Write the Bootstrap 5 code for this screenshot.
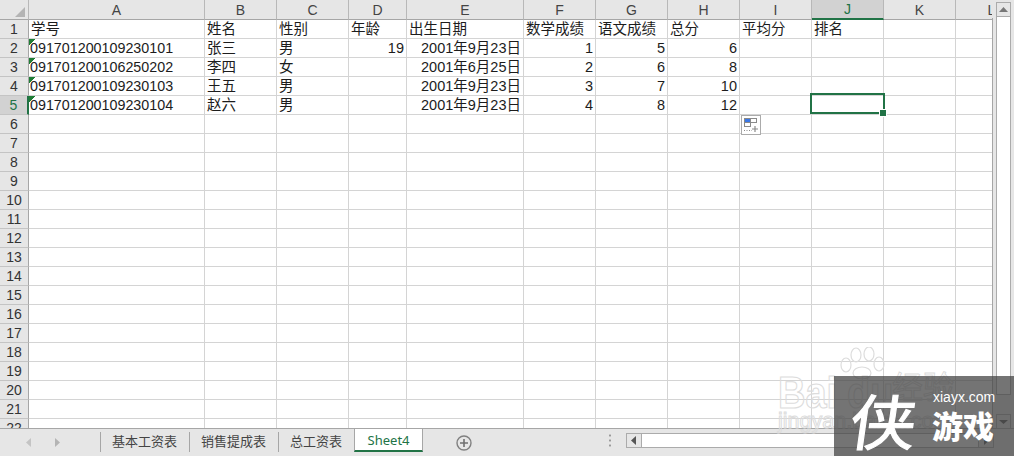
<!DOCTYPE html>
<html lang="zh-CN">
<head>
    <meta charset="UTF-8">
    <title>Sheet4 - Excel</title>
    <link href="https://cdn.jsdelivr.net/npm/bootstrap@5.3.0/dist/css/bootstrap.min.css" rel="stylesheet">
    <style>
        html, body { width: 1014px; height: 456px; overflow: hidden; }
        body { font-family: "Liberation Sans", "Noto Sans CJK SC", sans-serif; background: #e6e6e6; color: #1c1c1c; }

        .app-frame { width: 1014px; height: 456px; position: relative; overflow: hidden; }
        .work-area { height: 428px; }

        /* grid */
        .sheet-wrap { width: 992px; height: 428px; overflow: hidden; background: #fff; position: relative; }
        .xl-grid { width: 1028px; table-layout: fixed; border-collapse: separate; border-spacing: 0; font-size: 14.5px; line-height: 18px; }
        .w-head { width: 29px; }
        .w-a { width: 176px; }
        .w-std { width: 72px; }
        .w-d { width: 58px; }
        .w-e { width: 117px; }
        .xl-grid td, .xl-grid th { height: 19px; padding: 0 2px; border-right: 1px solid #d4d4d4; border-bottom: 1px solid #d4d4d4; white-space: nowrap; overflow: hidden; font-weight: 400; }
        .xl-grid thead th { background: #e6e6e6; color: #444; text-align: center; font-size: 14px; border-right-color: #b8b8b8; border-bottom-color: #a6a6a6; padding: 0; }
        .xl-grid thead th.sel-col { background: #d2d2d2; color: #217346; border-bottom: 2px solid #217346; }
        .xl-grid th.row-no { background: #e6e6e6; color: #333; text-align: center; font-size: 14px; padding: 0; border-right-color: #a6a6a6; border-bottom-color: #c4c4c4; }
        .xl-grid th.row-no.sel-row { background: #d2d2d2; color: #217346; border-right: 2px solid #217346; }
        .corner-mark { display: block; margin: 5px 0 0 15px; }
        .xl-grid td.id-cell { font-size: 14.3px; padding-left: 1px; background: linear-gradient(135deg, #1f7d35 4.5px, transparent 4.5px) no-repeat; }

        .sel-box { position: absolute; left: 810px; top: 93px; width: 75px; height: 21px; border: 2px solid #217346; }
        .sel-handle { position: absolute; right: -3px; bottom: -4px; width: 6px; height: 6px; background: #217346; outline: 1px solid #fff; }
        .paste-btn { position: absolute; left: 741px; top: 115px; width: 20px; height: 20px; border: 1px solid #ababab; background: #fff; line-height: 0; }

        /* scrollbars */
        .vbar { width: 22px; height: 428px; padding: 2px 3px 0 4px; background: linear-gradient(#a6a6a6, #a6a6a6) 0 18px / 1px 100% no-repeat #e6e6e6; }
        .sb-btn { background: #e6e6e6; border: 1px solid #ababab; line-height: 0; flex: none; }
        .vbar .sb-btn { height: 15px; width: 15px; }
        .vbar .sb-thumb { height: 378px; width: 15px; background: #fff; border: 1px solid #ababab; border-top: 0; flex: none; }
        .vbar .sb-gap { height: 19px; flex: none; }

        /* tab strip */
        .tab-strip { height: 28px; border-top: 1px solid #a6a6a6; background: #e6e6e6; font-size: 13px; color: #444; }
        .tab-nav { width: 100px; height: 100%; padding-left: 26px; gap: 24px; }
        .tab-item { height: 20px; margin-top: 3px; line-height: 19px; padding: 0 12px 0 11px; border-left: 1px solid #a6a6a6; }
        .tab-live { width: 69px; height: 23px; margin-top: 0; background: #fff; color: #217346; border-left: 1px solid #a6a6a6; border-right: 1px solid #a6a6a6; border-bottom: 2px solid #217346; text-align: center; line-height: 23px; font-family: "Noto Sans", sans-serif; }
        .add-sheet { margin-left: 33px; line-height: 0; }
        .split-dots { margin-left: 136px; width: 2px; height: 15px; background: radial-gradient(circle, #9a9a9a 1px, transparent 1.2px) 0 0 / 2px 5px; }
        .hbar { margin-left: 15px; width: 368px; height: 15px; background: #fff; border: 1px solid #ababab; }
        .hbar .sb-btn { width: 15px; height: 13px; border-width: 0 1px 0 0; }
        .hbar .sb-btn.end-btn { border-width: 0 0 0 1px; }

        /* watermarks */
        .wm-baidu { position: absolute; left: 778px; top: 347px; width: 190px; height: 95px; color: transparent; -webkit-text-stroke: 1px #dcdcdc; white-space: nowrap; }
        .wm-paw { position: absolute; left: 61px; top: 0; }
        .wm-name { position: absolute; left: 0; top: 24px; font-size: 38px; font-weight: 700; line-height: 44px; transform: scaleY(1.15); }
        .wm-du { left: 69px; }
        .wm-cn { position: absolute; left: 114px; top: 24px; font-size: 31px; line-height: 34px; }
        .wm-url { position: absolute; left: 0; top: 60px; font-size: 21.5px; line-height: 28px; }
        .xy-block { position: absolute; left: 834px; top: 376px; width: 180px; height: 80px; background: rgba(70, 70, 70, .75); color: #fff; }
        .xy-mark { position: absolute; left: 20px; top: 7px; font-size: 60px; line-height: 72px; font-family: "Noto Sans CJK SC", sans-serif; font-weight: 400; -webkit-text-stroke: 1px #fff; transform: skewX(-8deg) scaleX(1.1); }
        .xy-url { position: absolute; left: 99px; top: 13px; font-size: 14px; line-height: 16px; }
        .xy-cn { position: absolute; left: 98px; top: 31px; font-size: 31px; line-height: 36px; font-weight: 900; font-family: "Noto Sans CJK SC", sans-serif; }
    </style>
</head>
<body>
<div class="app-frame">
    <div class="work-area d-flex">
        <div class="sheet-wrap">
            <table class="xl-grid">
                <colgroup>
                    <col class="w-head"><col class="w-a"><col class="w-std"><col class="w-std"><col class="w-d"><col class="w-e">
                    <col class="w-std"><col class="w-std"><col class="w-std"><col class="w-std"><col class="w-std"><col class="w-std"><col class="w-std">
                </colgroup>
                <thead>
                    <tr>
                        <th><svg class="corner-mark" width="10" height="10"><polygon points="10,0 10,10 0,10" fill="#b4b4b4"/></svg></th>
                        <th>A</th><th>B</th><th>C</th><th>D</th><th>E</th><th>F</th><th>G</th><th>H</th><th>I</th><th class="sel-col">J</th><th>K</th><th>L</th>
                    </tr>
                </thead>
                <tbody id="grid-body">
                    <tr><th class="row-no">1</th><td>学号</td><td>姓名</td><td>性别</td><td>年龄</td><td>出生日期</td><td>数学成绩</td><td>语文成绩</td><td>总分</td><td>平均分</td><td>排名</td><td></td><td></td></tr>
                    <tr><th class="row-no">2</th><td class="id-cell">091701200109230101</td><td>张三</td><td>男</td><td class="text-end">19</td><td class="text-end">2001年9月23日</td><td class="text-end">1</td><td class="text-end">5</td><td class="text-end">6</td><td></td><td></td><td></td><td></td></tr>
                    <tr><th class="row-no">3</th><td class="id-cell">091701200106250202</td><td>李四</td><td>女</td><td></td><td class="text-end">2001年6月25日</td><td class="text-end">2</td><td class="text-end">6</td><td class="text-end">8</td><td></td><td></td><td></td><td></td></tr>
                    <tr><th class="row-no">4</th><td class="id-cell">091701200109230103</td><td>王五</td><td>男</td><td></td><td class="text-end">2001年9月23日</td><td class="text-end">3</td><td class="text-end">7</td><td class="text-end">10</td><td></td><td></td><td></td><td></td></tr>
                    <tr><th class="row-no sel-row">5</th><td class="id-cell">091701200109230104</td><td>赵六</td><td>男</td><td></td><td class="text-end">2001年9月23日</td><td class="text-end">4</td><td class="text-end">8</td><td class="text-end">12</td><td></td><td></td><td></td><td></td></tr>
                </tbody>
            </table>
            <div class="sel-box"><div class="sel-handle"></div></div>
            <div class="paste-btn">
                <svg width="18" height="18" viewBox="0 0 18 18">
                    <rect x="2.5" y="2.5" width="6" height="4" fill="#3b78e7" stroke="#8a8a8a"/>
                    <rect x="8.5" y="2.5" width="6" height="4" fill="#fff" stroke="#8a8a8a"/>
                    <rect x="2.5" y="6.5" width="6" height="4" fill="#fff" stroke="#8a8a8a"/>
                    <path d="M2 14.5h8" stroke="#8a8a8a" stroke-dasharray="1 1.5"/>
                    <path d="M13 10v6M10 13h6" stroke="#8a8a8a" stroke-width="1.2"/>
                </svg>
            </div>
        </div>
        <div class="vbar d-flex flex-column">
            <div class="sb-btn"><svg width="13" height="13"><polygon points="6.5,4 11,9 2,9" fill="#777"/></svg></div>
            <div class="sb-thumb"></div>
            <div class="sb-gap"></div>
            <div class="sb-btn"><svg width="13" height="13"><polygon points="2,5 11,5 6.5,9" fill="#555"/></svg></div>
        </div>
    </div>

    <div class="tab-strip d-flex align-items-start">
        <div class="tab-nav d-flex align-items-center">
            <svg width="5" height="9"><polygon points="5,0 5,9 0,4.5" fill="#c4c4c4"/></svg>
            <svg width="5" height="9"><polygon points="0,0 0,9 5,4.5" fill="#b4b4b4"/></svg>
        </div>
        <div class="tab-item">基本工资表</div>
        <div class="tab-item">销售提成表</div>
        <div class="tab-item">总工资表</div>
        <div class="tab-live">Sheet4</div>
        <div class="add-sheet mt-1">
            <svg width="17" height="19" viewBox="0 0 17 19"><circle cx="8" cy="10" r="7" fill="none" stroke="#808080" stroke-width="1.4"/><path d="M8 6v8M4 10h8" stroke="#707070" stroke-width="1.6"/></svg>
        </div>
        <div class="split-dots mt-1"></div>
        <div class="hbar d-flex justify-content-between mt-1">
            <div class="sb-btn"><svg width="14" height="13"><polygon points="9,2 9,11 4,6.5" fill="#555"/></svg></div>
            <div class="sb-btn end-btn"><svg width="14" height="13"><polygon points="5,2 5,11 10,6.5" fill="#555"/></svg></div>
        </div>
    </div>

    <div class="wm-baidu">
        <svg class="wm-paw" width="46" height="32" viewBox="0 0 46 32" fill="none" stroke="#dcdcdc" stroke-width="1.2">
            <ellipse cx="7" cy="18" rx="5" ry="7"/>
            <ellipse cx="17" cy="8" rx="5" ry="7"/>
            <ellipse cx="30" cy="7" rx="5" ry="7"/>
            <ellipse cx="40" cy="17" rx="5" ry="7"/>
            <ellipse cx="23" cy="26" rx="9" ry="6"/>
        </svg>
        <div class="wm-name">Bai</div>
        <div class="wm-name wm-du">du</div>
        <div class="wm-cn">经验</div>
        <div class="wm-url">jingyan.baidu.com</div>
    </div>
    <div class="xy-block">
        <div class="xy-mark">侠</div>
        <div class="xy-url">xiayx.com</div>
        <div class="xy-cn">游戏</div>
    </div>
</div>

<script src="https://cdn.jsdelivr.net/npm/bootstrap@5.3.0/dist/js/bootstrap.bundle.min.js"></script>
<script>
    // remaining empty rows of the sheet
    const body = document.getElementById('grid-body');
    for (let n = 6; n <= 22; n++) {
        body.insertAdjacentHTML('beforeend', `<tr><th class="row-no">${n}</th>${'<td></td>'.repeat(12)}</tr>`);
    }
</script>
</body>
</html>
